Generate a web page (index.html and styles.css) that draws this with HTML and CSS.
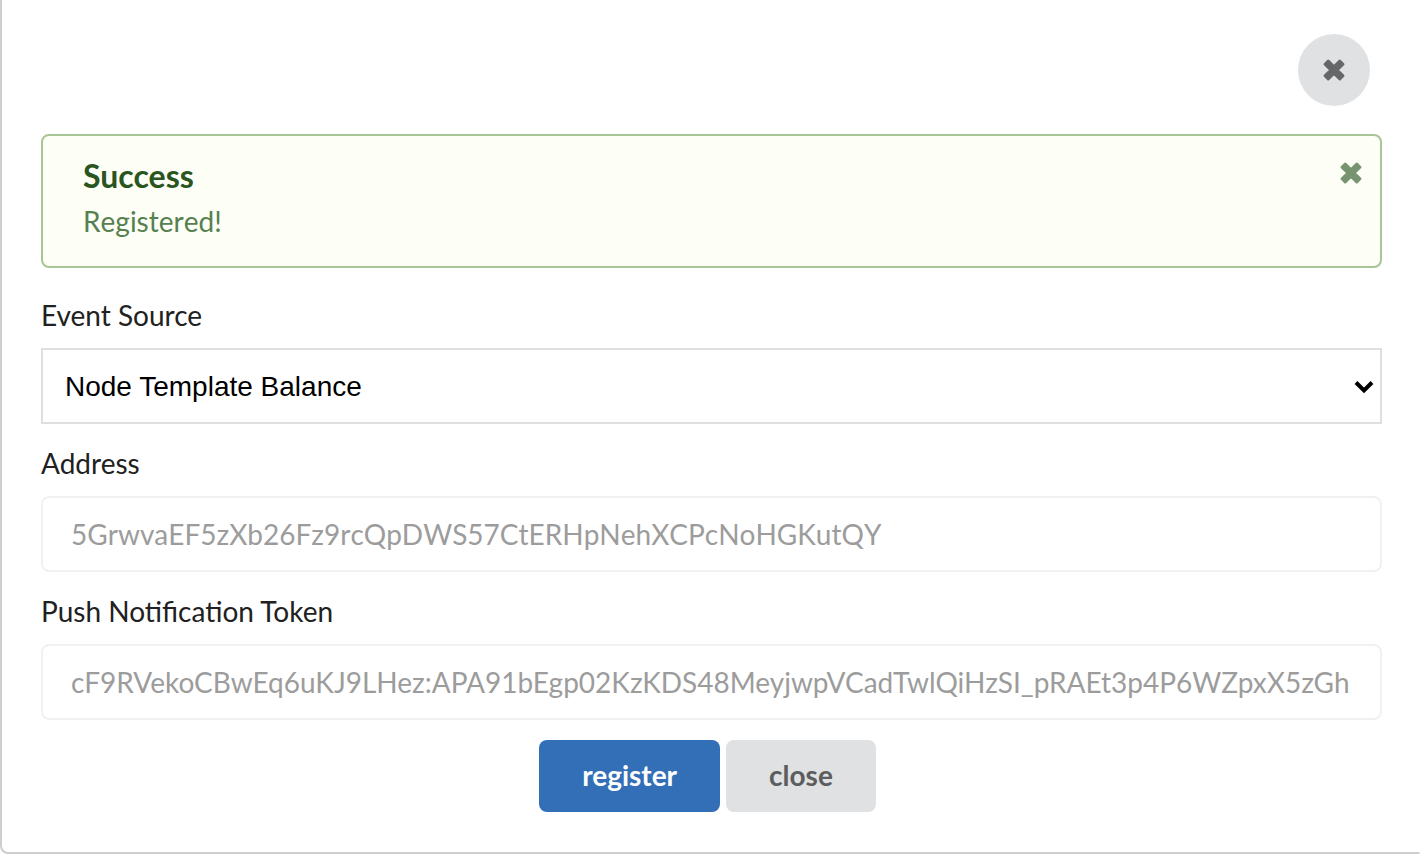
FILE: index.html
```html
<!DOCTYPE html>
<html lang="en">
<head>
<meta charset="utf-8">
<meta name="viewport" content="width=device-width, initial-scale=1">
<title>Register</title>
<link rel="stylesheet" href="styles.css">
</head>
<body>
<main class="card">
  <div class="toolbar">
    <button class="round-button" type="button" aria-label="Close panel">
      <svg class="cross" viewBox="0 0 22 22" aria-hidden="true"><path d="M5.2 2.1L11 7.9L16.8 2.1L19.9 5.2L14.1 11L19.9 16.8L16.8 19.9L11 14.1L5.2 19.9L2.1 16.8L7.9 11L2.1 5.2Z"/></svg>
    </button>
  </div>
  <section class="message" role="status">
    <div class="message-body">
      <h1 class="message-title">Success</h1>
      <p class="message-text">Registered!</p>
    </div>
    <button class="dismiss" type="button" aria-label="Dismiss message">
      <svg class="cross" viewBox="0 0 22 22" aria-hidden="true"><path d="M5.2 2.1L11 7.9L16.8 2.1L19.9 5.2L14.1 11L19.9 16.8L16.8 19.9L11 14.1L5.2 19.9L2.1 16.8L7.9 11L2.1 5.2Z"/></svg>
    </button>
  </section>
  <form class="form">
    <div class="field">
      <label class="label" for="source">Event Source</label>
      <div class="select-wrap">
        <select class="control select" id="source">
          <option>Node Template Balance</option>
        </select>
        <svg class="chevron" viewBox="0 0 20 14" aria-hidden="true"><path d="M2 2.5L10 10.5L18 2.5"/></svg>
      </div>
    </div>
    <div class="field">
      <label class="label" for="address">Address</label>
      <input class="control input unkerned" id="address" type="text" disabled value="5GrwvaEF5zXb26Fz9rcQpDWS57CtERHpNehXCPcNoHGKutQY">
    </div>
    <div class="field">
      <label class="label" for="token">Push Notification Token</label>
      <input class="control input" id="token" type="text" disabled value="cF9RVekoCBwEq6uKJ9LHez:APA91bEgp02KzKDS48MeyjwpVCadTwlQiHzSI_pRAEt3p4P6WZpxX5zGh">
    </div>
    <div class="actions">
      <button class="button primary" type="button">register</button>
      <button class="button" type="button">close</button>
    </div>
  </form>
</main>
</body>
</html>
```
FILE: styles.css
```css
* {
  box-sizing: border-box;
}

body {
  margin: 0;
  background: #fff;
  color: #212121;
  font-family: Lato, "Liberation Sans", sans-serif;
  font-size: 28px;
  line-height: 40px;
}

.card {
  padding: 34px 38px 40px 39px;
  border: solid #cececf;
  border-width: 0 0 2px 2px;
  border-radius: 0 0 2px 8px;
}

.toolbar {
  display: flex;
  justify-content: flex-end;
  padding-right: 12px;
  margin-bottom: 28px;
}

.round-button {
  display: flex;
  align-items: center;
  justify-content: center;
  width: 72px;
  height: 72px;
  padding: 0;
  border: 0;
  border-radius: 50%;
  background: #e0e1e2;
  color: #666768;
}

.cross {
  display: block;
  width: 22px;
  height: 22px;
  fill: currentColor;
  stroke: currentColor;
  stroke-width: 3;
  stroke-linejoin: round;
}

.message {
  display: flex;
  justify-content: space-between;
  align-items: flex-start;
  min-height: 134px;
  padding: 20px 18px 24px 40px;
  margin-bottom: 28px;
  border: 2px solid #a9c597;
  border-radius: 8px;
  background: #fdfff6;
}

.message-title {
  margin: 0 0 5px;
  color: #2a551f;
  font-size: 32px;
  line-height: 40px;
}

.message-text {
  margin: 0;
  color: #56804f;
  font-kerning: none;
}

.dismiss {
  padding: 6px 0;
  border: 0;
  background: none;
  color: #76946f;
}

.field {
  display: flex;
  flex-direction: column;
  gap: 14px;
  margin-bottom: 20px;
}

.label {
  display: block;
  line-height: 38px;
}

.control {
  display: block;
  width: 100%;
  height: 76px;
  margin: 0;
  border: 2px solid #dfdfe0;
  background: #fff;
  font-size: 28px;
}

.select-wrap {
  position: relative;
}

.select {
  appearance: none;
  padding: 0 48px 0 22px;
  border-radius: 0;
  color: #000;
  font-family: "Liberation Sans", Arial, sans-serif;
}

.chevron {
  position: absolute;
  top: 32px;
  right: 8px;
  width: 20px;
  height: 14px;
  fill: none;
  stroke: #000;
  stroke-width: 4;
  pointer-events: none;
}

.input {
  padding: 0 28px;
  border-color: #f1f1f1;
  border-radius: 8px;
  color: #9c9c9c;
  font-family: inherit;
}

.unkerned {
  font-kerning: none;
}

.actions {
  display: flex;
  justify-content: center;
  gap: 6px;
  padding-right: 8px;
}

.button {
  height: 72px;
  padding: 0 43px 2px;
  border: 0;
  border-radius: 8px;
  background: #e0e1e2;
  color: #5c5d5e;
  font-family: inherit;
  font-size: 28px;
  font-weight: 700;
}

.primary {
  background: #336fb6;
  color: #fff;
}
```
